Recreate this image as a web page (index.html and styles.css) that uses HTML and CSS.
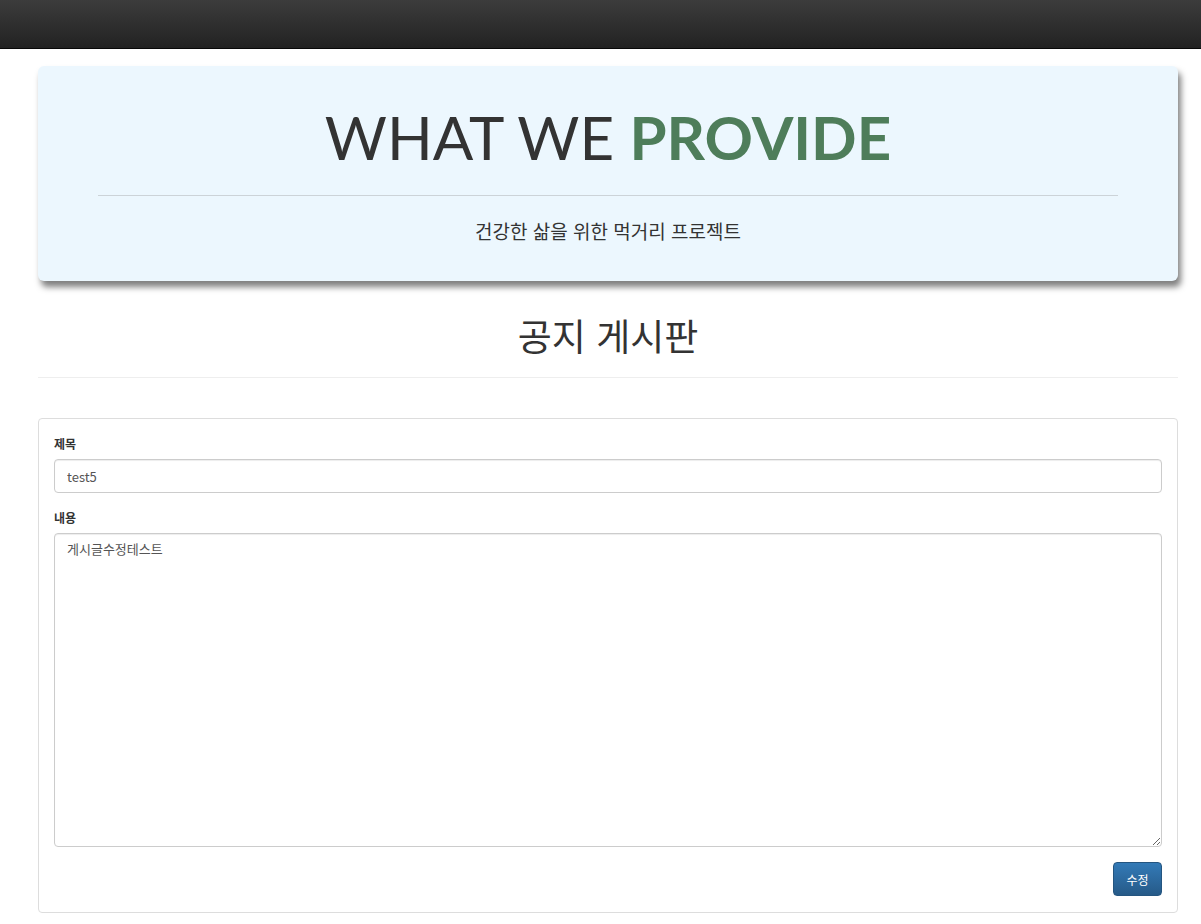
FILE: index.html
```html
<!DOCTYPE html>
<html lang="ko">
<head>
<meta charset="utf-8">
<title>공지 게시판</title>
<link rel="stylesheet" href="styles.css">
</head>
<body>
<nav class="navbar"></nav>
<div class="container">
  <section class="jumbotron">
    <h1 class="hero-title"><span class="light">WHAT WE</span> <span class="accent">PROVIDE</span></h1>
    <hr class="hero-rule">
    <p class="hero-sub">건강한 삶을 위한 먹거리 프로젝트</p>
  </section>
  <div class="page-header">
    <h2>공지 게시판</h2>
  </div>
  <form class="panel">
    <label class="field-label" for="title">제목</label>
    <input id="title" class="form-control" type="text" value="test5">
    <label class="field-label second" for="content">내용</label>
    <textarea id="content" class="form-control area">게시글수정테스트</textarea>
    <div class="actions">
      <button type="button" class="btn-primary">수정</button>
    </div>
  </form>
</div>
</body>
</html>
```

FILE: styles.css
```css
* { box-sizing: border-box; }
html, body { margin: 0; padding: 0; background: #fff; }
body {
  font-family: "Noto Sans CJK KR", "Noto Sans", sans-serif;
  color: #333;
  font-size: 14px;
}
.navbar {
  height: 49px;
  background: linear-gradient(to bottom, #3c3c3c 0%, #222 100%);
  border-bottom: 1px solid #080808;
}
.container {
  width: 1140px;
  margin-left: 38px;
}
.jumbotron {
  margin-top: 17px;
  height: 215px;
  background: #ecf7fe;
  border-radius: 6px;
  padding: 0 60px;
  box-shadow: 3px 6px 6px rgba(0, 0, 0, 0.5);
  display: flex;
  flex-direction: column;
  align-items: center;
}
.hero-title {
  margin: 39px 0 0;
  font-family: "Lato", "Noto Sans", sans-serif;
  font-size: 60px;
  line-height: 64px;
  font-weight: 400;
  letter-spacing: 0;
  color: #333;
  white-space: nowrap;
}
.hero-title .accent {
  color: #4e7d5a;
  font-weight: 700;
}
.hero-rule {
  width: 100%;
  margin: 26px 0 0;
  border: 0;
  border-top: 1px solid #ccd3d8;
}
.hero-sub {
  margin: 21px 0 0;
  font-size: 19px;
  line-height: 28px;
  color: #333;
}
.page-header {
  margin-top: 26px;
  border-bottom: 1px solid #eee;
  height: 71px;
  text-align: center;
}
.page-header h2 {
  margin: 0;
  font-size: 37px;
  font-weight: 400;
  line-height: 56px;
  color: #333;
}
.panel {
  margin-top: 40px;
  height: 495px;
  border: 1px solid #ddd;
  border-radius: 4px;
  padding: 15px 15px 0;
  display: flex;
  flex-direction: column;
}
.field-label {
  font-size: 12px;
  font-weight: 700;
  line-height: 20px;
  margin-bottom: 5px;
}
.field-label.second { margin-top: 15px; margin-bottom: 5px; }
.form-control {
  width: 100%;
  height: 34px;
  border: 1px solid #ccc;
  border-radius: 4px;
  padding: 6px 12px;
  font-family: "Noto Sans CJK KR", "Noto Sans", sans-serif;
  font-size: 13px;
  color: #555;
  background: #fff;
  box-shadow: inset 0 1px 1px rgba(0,0,0,0.075);
}
.form-control.area {
  height: 314px;
  flex: none;
  resize: vertical;
  line-height: 20px;
  padding-top: 5px;
}
.actions {
  display: flex;
  justify-content: flex-end;
  margin-top: 15px;
}
.btn-primary {
  height: 34px;
  width: 49px;
  border: 1px solid #245580;
  border-radius: 4px;
  background: linear-gradient(to bottom, #337ab7 0%, #265a88 100%);
  color: #fff;
  font-family: "Noto Sans CJK KR", "Noto Sans", sans-serif;
  font-size: 12px;
  padding: 0;
}
```
